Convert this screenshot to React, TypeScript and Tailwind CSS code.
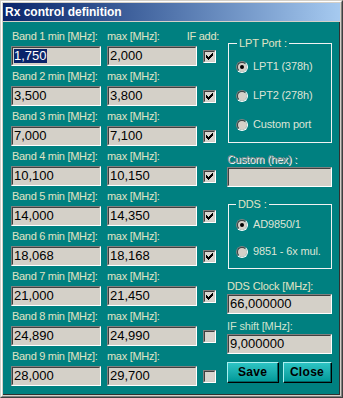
import React from 'react';

// ─── Win2000-style bits ─────────────────────────────────────────────────────────

const Field: React.FC<{ value?: string; selected?: boolean; w?: string }> = ({ value = '', selected, w = 'w-[90px]' }) => (
  <div className={`${w} h-[20px] border border-t-[#808080] border-l-[#808080] border-b-white border-r-white`}>
    <div className="h-full border border-t-[#404040] border-l-[#404040] border-b-[#d4d0c8] border-r-[#d4d0c8] bg-[#d4d0c8] flex items-center pl-px text-black text-[13px] leading-[14px] tracking-normal font-['Liberation_Sans_Narrow','Liberation_Sans',sans-serif]">
      {selected ? <span className="bg-[#0a246a] text-white">{value}</span> : value}
    </div>
  </div>
);

const Check: React.FC<{ on?: boolean }> = ({ on }) => (
  <div className="w-[13px] h-[13px] border border-t-[#808080] border-l-[#808080] border-b-white border-r-white">
    <div className="w-full h-full border border-t-[#404040] border-l-[#404040] border-b-[#d4d0c8] border-r-[#d4d0c8] bg-[#d8d5cf]">
      {on && (
        <svg width="9" height="9" viewBox="0 0 9 9" shapeRendering="crispEdges">
          <path d="M1 3 L3 5 L7 1 L8 1 L8 4 L3 8 L1 6 Z" fill="#000" />
        </svg>
      )}
    </div>
  </div>
);

const Radio: React.FC<{ label: string; on?: boolean; h: string }> = ({ label, on, h }) => (
  <div className={`flex items-center gap-[5px] pl-[7px] ${h}`}>
    <div className="w-[12px] h-[12px] rounded-full border border-t-[#808080] border-l-[#808080] border-b-white border-r-white">
      <div className="w-full h-full rounded-full border border-t-[#404040] border-l-[#404040] border-b-[#d4d0c8] border-r-[#d4d0c8] bg-[#d4d0c8] flex items-center justify-center">
        {on && <div className="w-[4px] h-[4px] rounded-full bg-black" />}
      </div>
    </div>
    <span className="text-[#dde4d6] whitespace-nowrap">{label}</span>
  </div>
);

const Btn: React.FC<{ label: string; w: string }> = ({ label, w }) => (
  <button className={`${w} h-[21px] border border-t-[#a8f0f0] border-l-[#a8f0f0] border-b-black border-r-black`}>
    <div className="h-full flex items-center justify-center bg-gradient-to-b from-[#2cc4c4] to-[#009a9a] border-b border-r border-b-[#006464] border-r-[#006464] text-black font-bold text-[12px] tracking-[0.3px]">
      {label}
    </div>
  </button>
);

const bands = [
  ['1,750', '2,000', true],
  ['3,500', '3,800', true],
  ['7,000', '7,100', true],
  ['10,100', '10,150', true],
  ['14,000', '14,350', true],
  ['18,068', '18,168', true],
  ['21,000', '21,450', true],
  ['24,890', '24,990', false],
  ['28,000', '29,700', false],
] as const;

// ─── App ────────────────────────────────────────────────────────────────────────

export default function App() {
  return (
    <div className="w-[343px] h-[398px] font-['Liberation_Sans',Arial,sans-serif] text-[11px] leading-[15px] tracking-[-0.15px] border border-t-[#d4d0c8] border-l-[#d4d0c8] border-b-[#404040] border-r-[#404040]">
      <div className="w-full h-full bg-[#d4d0c8] border border-t-white border-l-white border-b-[#808080] border-r-[#808080] p-px flex flex-col">
        {/* Title bar */}
        <div className="h-[18px] shrink-0 bg-gradient-to-r from-[#0a246a] to-[#a6caf0] flex items-center pl-[2px] text-white font-bold text-[12px] tracking-normal">
          Rx control definition
        </div>

        {/* Client */}
        <div className="mt-px flex-1 bg-[#008080] border-r border-b border-r-[#303030] border-b-[#303030] flex text-[#e1e4c5]">
          {/* Bands */}
          <div className="pl-[8px] pt-[7px] flex flex-col">
            {bands.map(([lo, hi, on], i) => (
              <div key={i} className="h-[40px]">
                <div className="h-[15px] flex gap-[6px] whitespace-nowrap tracking-[-0.3px]">
                  <div className="w-[90px] pl-px">Band {i + 1} min [MHz]:</div>
                  <div className="w-[90px]">max [MHz]:</div>
                  <div className="w-[13px] flex justify-end">
                    {i === 0 && <span className="mr-[-3px]">IF add:</span>}
                  </div>
                </div>
                <div className="mt-[2px] flex items-center gap-[6px]">
                  <Field value={lo} selected={i === 0} />
                  <Field value={hi} />
                  <div className="pt-px">
                    <Check on={on} />
                  </div>
                </div>
              </div>
            ))}
          </div>

          {/* Right column */}
          <div className="ml-[11px] pt-[15px] w-[105px] flex flex-col">
            <fieldset className="ml-px w-[104px] border border-[#f2f2f2] pb-[3px]">
              <legend className="ml-[8px] px-[2px] leading-[13px]">LPT Port :</legend>
              <div className="pt-[2px]">
                <Radio label="LPT1 (378h)" on h="h-[29px]" />
                <Radio label="LPT2 (278h)" h="h-[29px]" />
                <Radio label="Custom port" h="h-[29px]" />
              </div>
            </fieldset>

            <div className="mt-[9px] h-[15px] text-[#8a8a8a] [text-shadow:1px_1px_0_#ffffff]">Custom (hex) :</div>
            <Field w="w-[105px]" />

            <fieldset className="mt-[11px] ml-px w-[104px] border border-[#f2f2f2] pb-[3px]">
              <legend className="ml-[7px] px-[2px] leading-[13px]">DDS :</legend>
              <Radio label="AD9850/1" on h="h-[27px]" />
              <Radio label="9851 - 6x mul." h="h-[27px]" />
            </fieldset>

            <div className="mt-[10px] h-[15px] whitespace-nowrap">DDS Clock [MHz]:</div>
            <Field value="66,000000" w="w-[105px]" />

            <div className="mt-[5px] h-[15px] text-[#cfe3cf]">IF shift [MHz]:</div>
            <Field value="9,000000" w="w-[105px]" />

            <div className="mt-[8px] flex gap-[4px]">
              <Btn label="Save" w="w-[52px]" />
              <Btn label="Close" w="w-[49px]" />
            </div>
          </div>
        </div>
      </div>
    </div>
  );
}
